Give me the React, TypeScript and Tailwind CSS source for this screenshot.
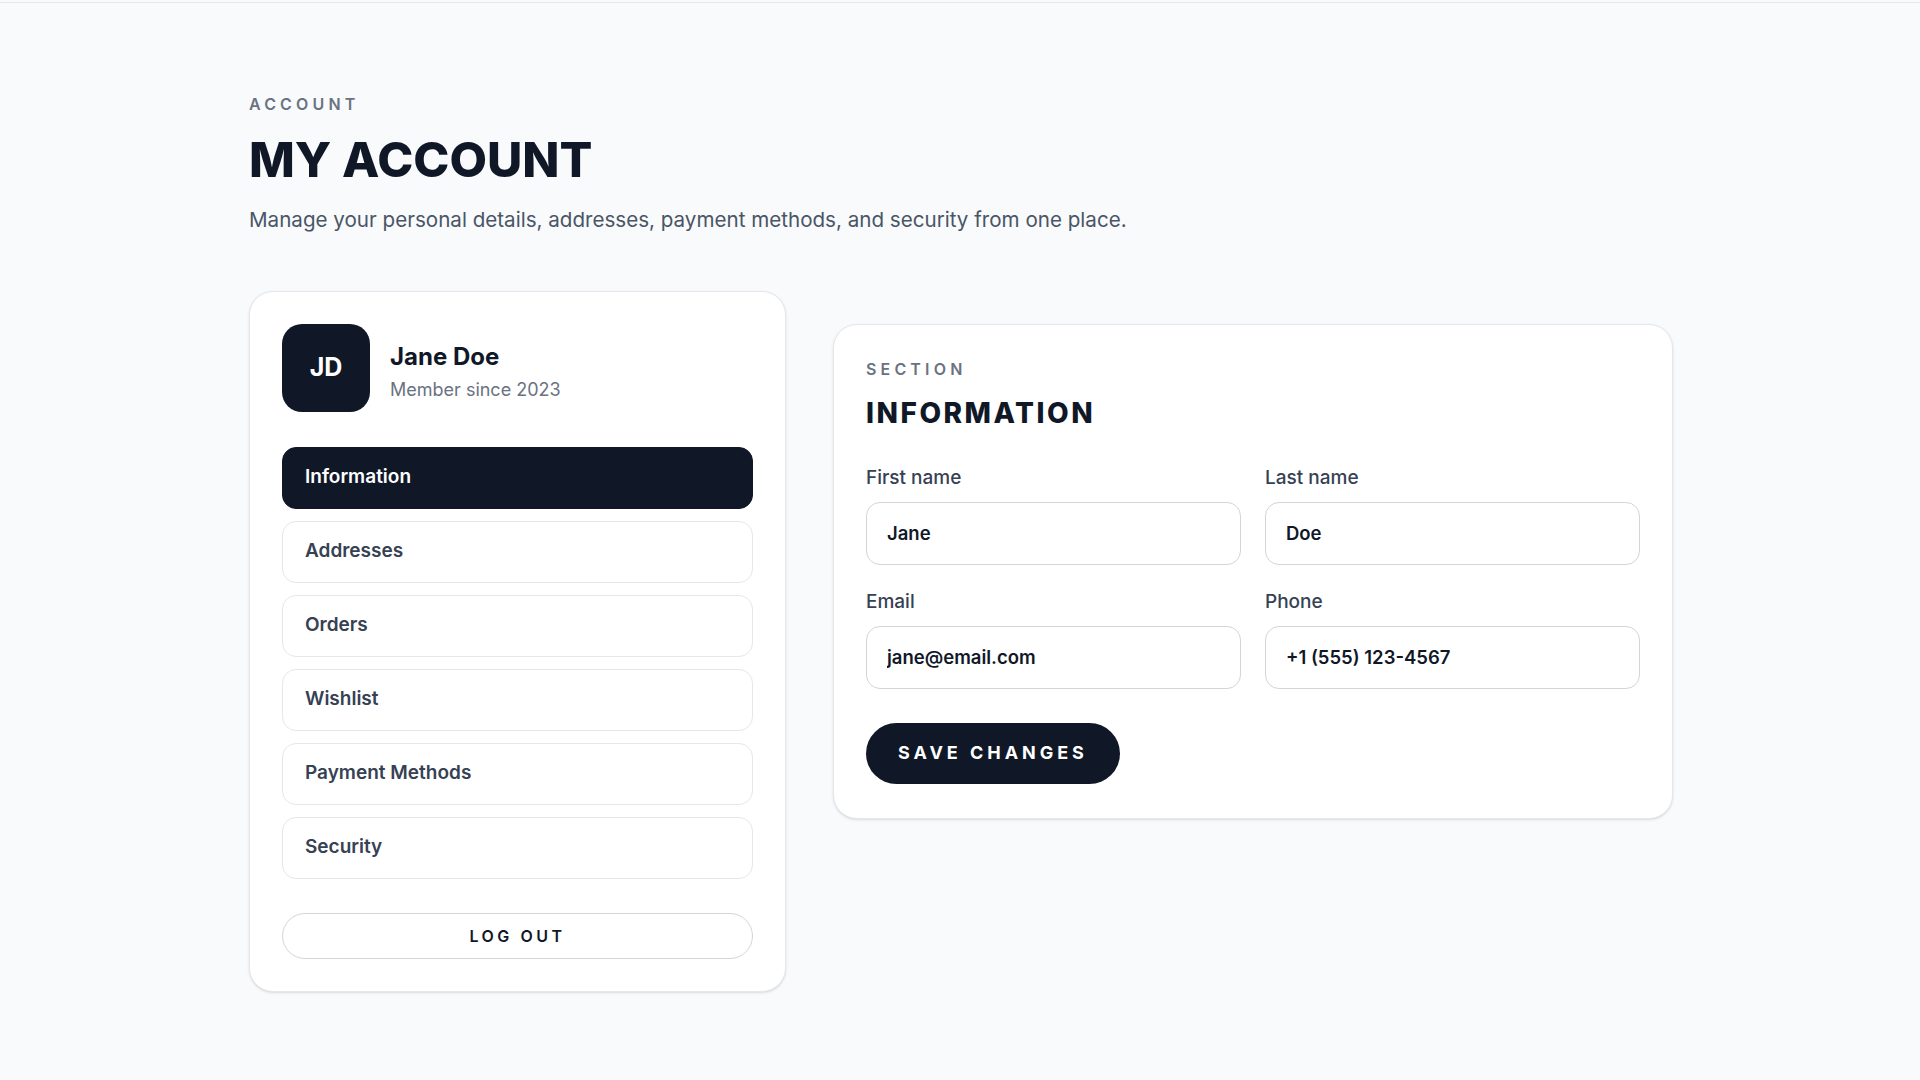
import { useState } from "react"

const navItems = ["Information", "Addresses", "Orders", "Wishlist", "Payment Methods", "Security"]

function Field({ label, value }: { label: string; value: string }) {
  return (
    <div className="flex flex-col">
      <label className="text-[19px] leading-6 font-medium text-gray-700">{label}</label>
      <input
        defaultValue={value}
        className="mt-3 h-[63px] w-full rounded-[14px] border border-gray-300 bg-white px-5 text-[18.5px] font-semibold text-gray-900 outline-none"
      />
    </div>
  )
}

export default function App() {
  const [active, setActive] = useState("Information")

  return (
    <div className="min-h-screen bg-[#f8fafc] font-['Inter','Liberation_Sans',sans-serif]">
      <div className="h-[3px] border-b border-gray-200" />
      <main className="mx-auto w-[1426px] pl-[2px] pt-[89px] pb-16">
        <p className="text-base leading-6 font-semibold tracking-[0.26em] text-gray-500">ACCOUNT</p>
        <h1 className="mt-5 text-[48.6px] leading-none font-extrabold text-gray-900">MY ACCOUNT</h1>
        <p className="mt-[21px] text-[20.6px] leading-7 text-gray-600">
          Manage your personal details, addresses, payment methods, and security from one place.
        </p>

        <div className="mt-[57px] grid grid-cols-[537px_1fr] items-start gap-[47px]">
          <aside className="rounded-3xl border border-gray-200 bg-white px-8 pt-8 pb-8 shadow-sm">
            <div className="flex items-center gap-5">
              <div className="flex h-[88px] w-[88px] items-center justify-center rounded-[20px] bg-gray-900 text-[25px] font-bold text-white">
                JD
              </div>
              <div className="pt-[10px]">
                <p className="text-2xl leading-8 font-bold text-gray-900">Jane Doe</p>
                <p className="mt-[3px] text-lg leading-7 text-gray-500">Member since 2023</p>
              </div>
            </div>

            <nav className="mt-[35px] flex flex-col gap-3">
              {navItems.map((item) => (
                <button
                  key={item}
                  onClick={() => setActive(item)}
                  className={
                    item === active
                      ? "h-[62px] rounded-[14px] border border-gray-900 bg-gray-900 px-[22px] text-left text-[19px] font-semibold text-white"
                      : "h-[62px] rounded-[14px] border border-gray-200 bg-white px-[22px] text-left text-[19px] font-semibold text-gray-700"
                  }
                >
                  {item}
                </button>
              ))}
            </nav>

            <button className="mt-[34px] h-[46px] w-full rounded-full border border-gray-300 bg-white text-base font-semibold tracking-[0.22em] text-gray-900">
              LOG OUT
            </button>
          </aside>

          <section className="mt-[33px] rounded-3xl border border-gray-200 bg-white px-8 pt-8 pb-[34px] shadow-sm">
            <p className="text-base leading-6 font-semibold tracking-[0.26em] text-gray-500">SECTION</p>
            <h2 className="mt-[14px] text-[28px] leading-9 font-extrabold tracking-[0.09em] text-gray-900">INFORMATION</h2>

            <div className="mt-[35px] grid grid-cols-2 gap-x-6 gap-y-[25px]">
              <Field label="First name" value="Jane" />
              <Field label="Last name" value="Doe" />
              <Field label="Email" value="jane@email.com" />
              <Field label="Phone" value="+1 (555) 123-4567" />
            </div>

            <button className="mt-[34px] h-[61px] rounded-full bg-gray-900 px-8 text-lg font-bold tracking-[0.22em] text-white">
              SAVE CHANGES
            </button>
          </section>
        </div>
      </main>
    </div>
  )
}
